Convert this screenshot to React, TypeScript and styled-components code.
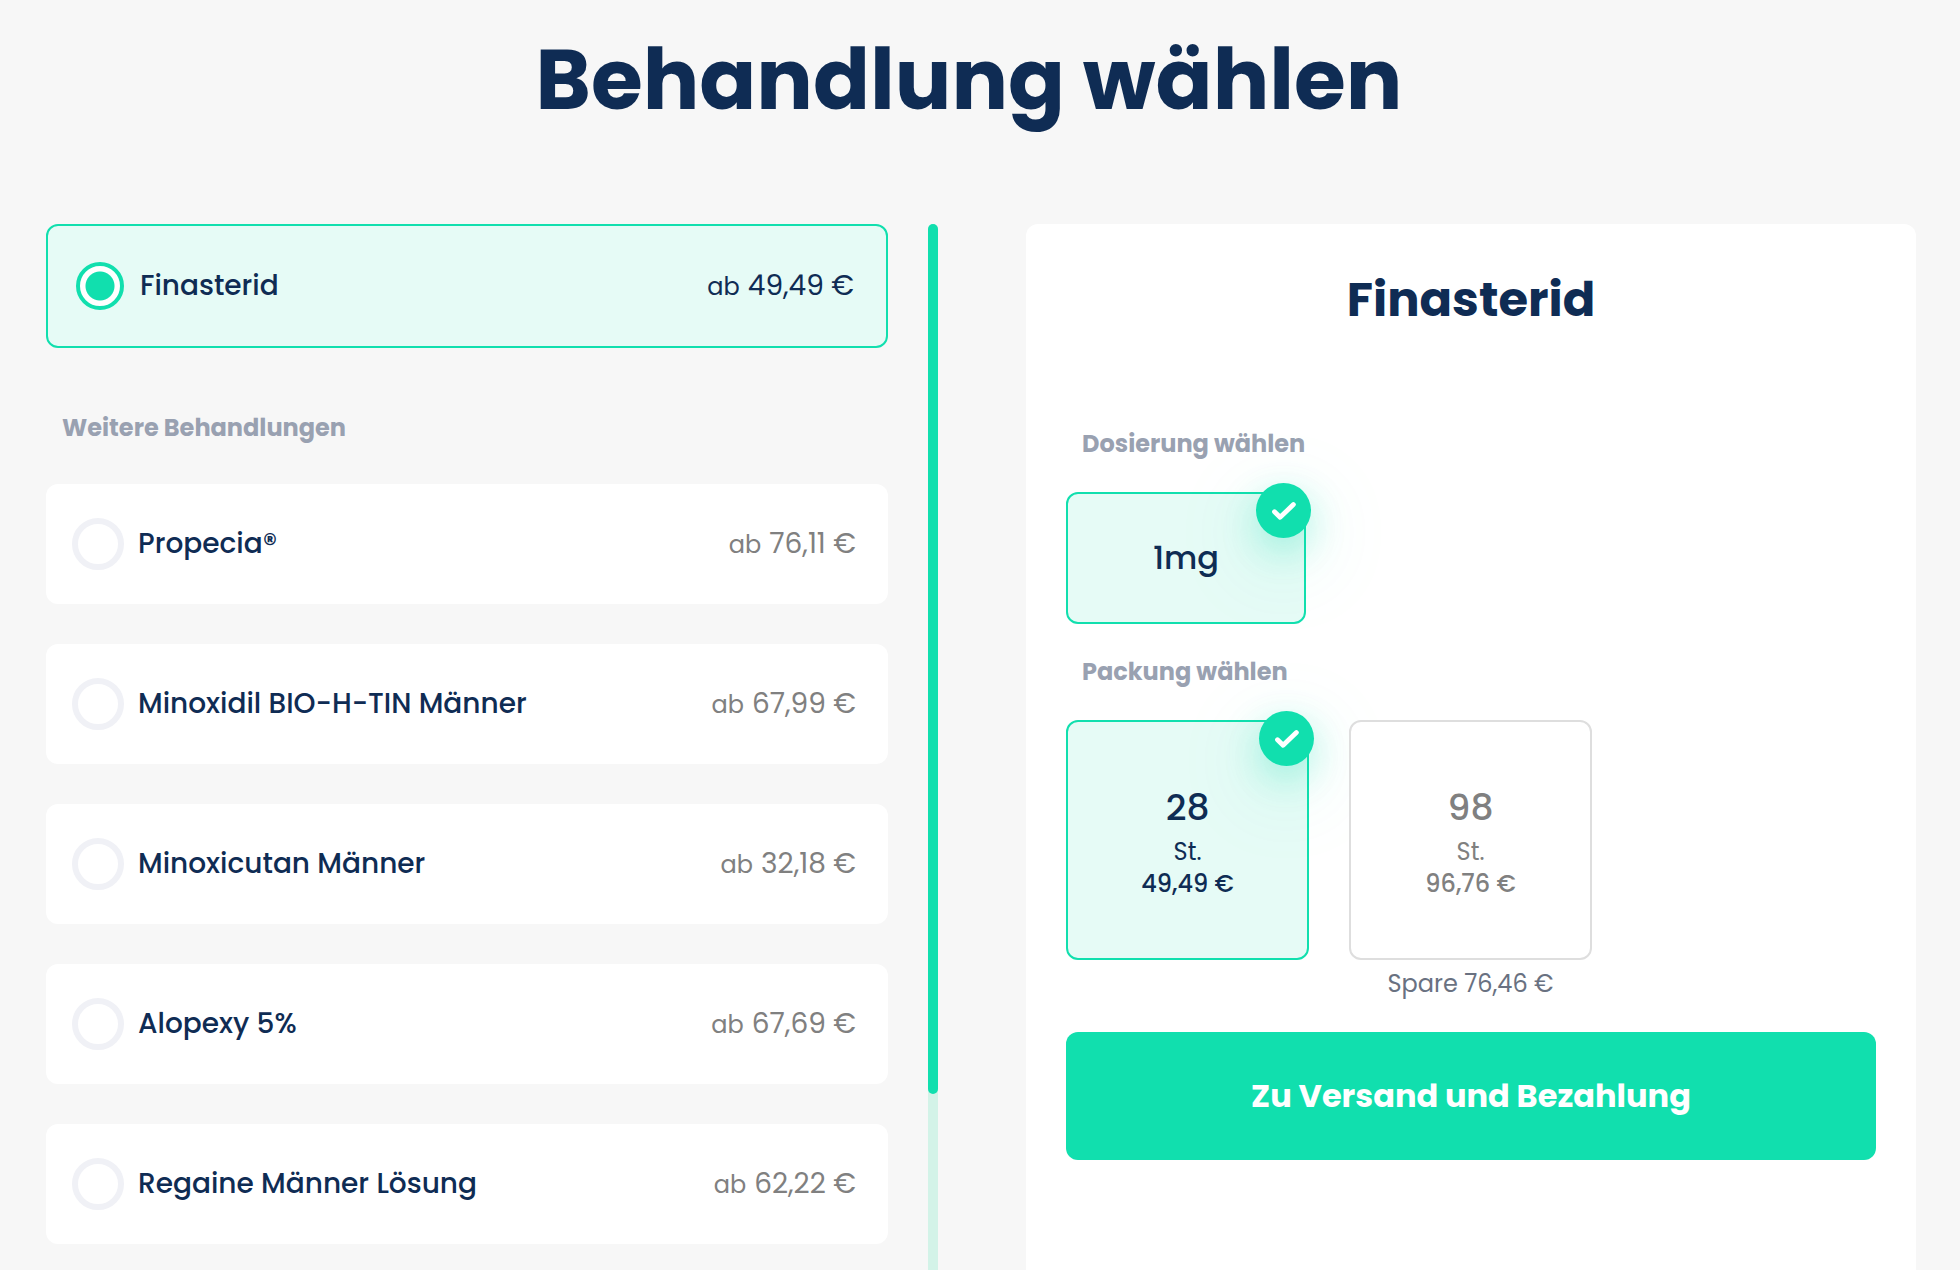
import React, { useState } from "react";
import styled, { createGlobalStyle } from "styled-components";

const color = {
  page: "#f7f7f7",
  surface: "#ffffff",
  navy: "#0f2c54",
  green: "#11dfae",
  mint: "#e6fbf6",
  track: "#d3f3e8",
  label: "#99a1b1",
  grey: "#808080",
  slate: "#697181",
  ring: "#f0f1f6",
  line: "#dedede",
};

const GlobalStyle = createGlobalStyle`
  *, *::before, *::after { box-sizing: border-box; }
  body {
    margin: 0;
    background: ${color.page};
    color: ${color.navy};
    font-family: Poppins, Inter, "Liberation Sans", sans-serif;
  }
`;

const Page = styled.div`
  display: flex;
  flex-direction: column;
  min-height: 100vh;
  padding: 0 44px 0 46px;
`;

const Header = styled.header`
  padding: 20px 24px 84px 0;
  text-align: center;
`;

const Title = styled.h1`
  margin: 0;
  font-size: 84px;
  font-weight: 700;
  line-height: 120px;
`;

const Main = styled.main`
  flex: 1;
  display: grid;
  grid-template-columns: minmax(0, 892fr) minmax(0, 890fr);
  column-gap: 88px;
`;

const Treatments = styled.section`
  display: flex;
  gap: 40px;
`;

const TreatmentList = styled.div`
  flex: 1;
  display: flex;
  flex-direction: column;
  min-width: 0;
  padding-bottom: 26px;
`;

const ScrollTrack = styled.div`
  width: 10px;
  background: ${color.track};
  border-radius: 5px 5px 0 0;
`;

const ScrollThumb = styled.div<{ $share: number }>`
  height: ${(p) => p.$share}%;
  background: ${color.green};
  border-radius: 5px;
`;

const SectionLabel = styled.h3`
  margin: 0;
  padding: 0 16px;
  color: ${color.label};
  font-size: 24px;
  font-weight: 700;
  line-height: 36px;
`;

const MoreLabel = styled(SectionLabel)`
  margin: 62px 0 38px;
`;

const TreatmentStack = styled.div`
  display: flex;
  flex-direction: column;
  gap: 40px;
`;

const TreatmentRow = styled.label<{ $active: boolean }>`
  display: flex;
  align-items: center;
  gap: ${(p) => (p.$active ? 16 : 14)}px;
  height: ${(p) => (p.$active ? 124 : 120)}px;
  padding: 0 32px 0 ${(p) => (p.$active ? 28 : 26)}px;
  border: ${(p) => (p.$active ? `2px solid ${color.green}` : "0")};
  border-radius: 12px;
  background: ${(p) => (p.$active ? color.mint : color.surface)};
  cursor: pointer;
`;

const Radio = styled.input`
  appearance: none;
  flex: none;
  width: 52px;
  height: 52px;
  margin: 0;
  border: 6px solid ${color.ring};
  border-radius: 50%;
  background: ${color.surface};

  &:checked {
    width: 48px;
    height: 48px;
    border: 4px solid ${color.green};
    background: radial-gradient(circle, ${color.green} 14px, ${color.surface} 15px);
  }
`;

const TreatmentName = styled.span`
  flex: 1;
  font-size: 28px;
  font-weight: 500;
  line-height: 40px;
`;

const TreatmentPrice = styled.span<{ $active: boolean }>`
  color: ${(p) => (p.$active ? color.navy : color.grey)};
  font-size: 28px;
  line-height: 40px;
`;

const From = styled.span`
  margin-right: 8px;
  font-size: 24px;
`;

const Panel = styled.section`
  padding: 40px;
  border-radius: 12px 12px 0 0;
  background: ${color.surface};
`;

const PanelTitle = styled.h2`
  margin: 0 0 90px;
  font-size: 48px;
  font-weight: 700;
  line-height: 72px;
  text-align: center;
`;

const OptionGroup = styled.div`
  display: flex;
  align-items: flex-start;
  gap: 40px;
  margin: 30px 0;
`;

const PackGroup = styled(OptionGroup)`
  margin-bottom: 32px;
`;

const OptionColumn = styled.div<{ $width: number }>`
  display: flex;
  flex-direction: column;
  gap: 8px;
  width: ${(p) => p.$width}px;
`;

const Option = styled.button<{ $active: boolean; $tall?: boolean }>`
  position: relative;
  display: flex;
  flex-direction: column;
  align-items: center;
  justify-content: center;
  width: 100%;
  height: ${(p) => (p.$tall ? 240 : 132)}px;
  padding: 0;
  border: 2px solid ${(p) => (p.$active ? color.green : color.line)};
  border-radius: 12px;
  background: ${(p) => (p.$active ? color.mint : color.surface)};
  color: ${(p) => (p.$active ? color.navy : color.grey)};
  font: inherit;
  cursor: pointer;
`;

const Dose = styled.span`
  font-size: 32px;
  font-weight: 500;
  line-height: 48px;
`;

const PackCount = styled.span`
  font-size: 36px;
  font-weight: 500;
  line-height: 56px;
`;

const PackUnit = styled.span`
  font-size: 24px;
  line-height: 32px;
`;

const PackPrice = styled.span`
  font-size: 24px;
  font-weight: 500;
  line-height: 32px;
`;

const Saving = styled.span`
  color: ${color.slate};
  font-size: 24px;
  line-height: 32px;
  text-align: center;
`;

const CheckBadge = styled.span`
  position: absolute;
  top: -11px;
  right: -7px;
  display: grid;
  place-items: center;
  width: 55px;
  height: 55px;
  border-radius: 50%;
  background: ${color.green};
  box-shadow:
    0 12px 36px rgba(17, 223, 174, 0.3),
    0 22px 90px rgba(17, 223, 174, 0.2);
`;

const SubmitButton = styled.button`
  display: block;
  width: 100%;
  height: 128px;
  border: 0;
  border-radius: 12px;
  background: ${color.green};
  color: ${color.surface};
  font: inherit;
  font-size: 32px;
  font-weight: 700;
  cursor: pointer;
`;

const Check = () => (
  <CheckBadge>
    <svg width="24" height="18" viewBox="0 0 24 18" fill="none" aria-hidden="true">
      <path
        d="M2.5 9.7 L8.1 15.3 L21.4 2.6"
        stroke="#fff"
        strokeWidth="4.8"
        strokeLinecap="round"
        strokeLinejoin="round"
      />
    </svg>
  </CheckBadge>
);

type Treatment = { name: string; price: string };

const featured: Treatment = { name: "Finasterid", price: "49,49 €" };

const others: Treatment[] = [
  { name: "Propecia®", price: "76,11 €" },
  { name: "Minoxidil BIO-H-TIN Männer", price: "67,99 €" },
  { name: "Minoxicutan Männer", price: "32,18 €" },
  { name: "Alopexy 5%", price: "67,69 €" },
  { name: "Regaine Männer Lösung", price: "62,22 €" },
];

const packs = [
  { count: "28", price: "49,49 €", saving: "" },
  { count: "98", price: "96,76 €", saving: "Spare 76,46 €" },
];

type RowProps = { item: Treatment; active: boolean; onSelect: () => void };

const TreatmentOption = ({ item, active, onSelect }: RowProps) => (
  <TreatmentRow $active={active}>
    <Radio type="radio" name="treatment" checked={active} onChange={onSelect} />
    <TreatmentName>{item.name}</TreatmentName>
    <TreatmentPrice $active={active}>
      <From>ab</From>
      {item.price}
    </TreatmentPrice>
  </TreatmentRow>
);

export default function App() {
  const [treatment, setTreatment] = useState(featured.name);
  const [pack, setPack] = useState("28");

  return (
    <>
      <GlobalStyle />
      <Page>
        <Header>
          <Title>Behandlung wählen</Title>
        </Header>
        <Main>
          <Treatments>
            <TreatmentList>
              <TreatmentOption
                item={featured}
                active={treatment === featured.name}
                onSelect={() => setTreatment(featured.name)}
              />
              <MoreLabel>Weitere Behandlungen</MoreLabel>
              <TreatmentStack>
                {others.map((item) => (
                  <TreatmentOption
                    key={item.name}
                    item={item}
                    active={treatment === item.name}
                    onSelect={() => setTreatment(item.name)}
                  />
                ))}
              </TreatmentStack>
            </TreatmentList>
            <ScrollTrack>
              <ScrollThumb $share={83.2} />
            </ScrollTrack>
          </Treatments>

          <Panel>
            <PanelTitle>{treatment}</PanelTitle>
            <SectionLabel>Dosierung wählen</SectionLabel>
            <OptionGroup>
              <OptionColumn $width={240}>
                <Option type="button" $active>
                  <Dose>1mg</Dose>
                  <Check />
                </Option>
              </OptionColumn>
            </OptionGroup>
            <SectionLabel>Packung wählen</SectionLabel>
            <PackGroup>
              {packs.map((p) => (
                <OptionColumn key={p.count} $width={243}>
                  <Option type="button" $tall $active={pack === p.count} onClick={() => setPack(p.count)}>
                    <PackCount>{p.count}</PackCount>
                    <PackUnit>St.</PackUnit>
                    <PackPrice>{p.price}</PackPrice>
                    {pack === p.count && <Check />}
                  </Option>
                  {p.saving && <Saving>{p.saving}</Saving>}
                </OptionColumn>
              ))}
            </PackGroup>
            <SubmitButton type="button">Zu Versand und Bezahlung</SubmitButton>
          </Panel>
        </Main>
      </Page>
    </>
  );
}
